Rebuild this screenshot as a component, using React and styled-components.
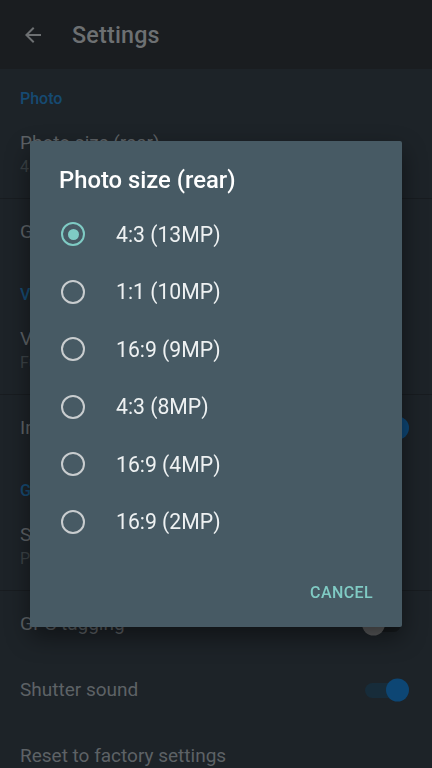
import React from 'react';
import styled, { createGlobalStyle } from 'styled-components';

const GlobalStyle = createGlobalStyle`
	html, body {
		margin: 0;
		padding: 0;
		background: #1d2328;
	}
	body {
		font-family: Roboto, "Noto Sans", "Liberation Sans", sans-serif;
		-webkit-font-smoothing: antialiased;
	}
`;

const sizes = ['4:3 (13MP)', '1:1 (10MP)', '16:9 (9MP)', '4:3 (8MP)', '16:9 (4MP)', '16:9 (2MP)'];

const BackArrow = () => (
	<svg width="24" height="24" viewBox="0 0 24 24">
		<path d="M20 11H7.83l5.59-5.59L12 4l-8 8 8 8 1.41-1.41L7.83 13H20v-2z" fill="#6d7072" />
	</svg>
);

const Switch = ({ on }) => (
	<Track on={on ? 1 : 0}>
		<Thumb on={on ? 1 : 0} />
	</Track>
);

export default function App() {
	return (
		<>
			<GlobalStyle />
			<Page>
				<Toolbar>
					<BackArrow />
					<ToolbarTitle>Settings</ToolbarTitle>
				</Toolbar>

				<Category>Photo</Category>
				<TwoLine>
					<Primary>Photo size (rear)</Primary>
					<Secondary>4:3 (13MP)</Secondary>
				</TwoLine>
				<Divider />
				<OneLine>
					<Primary>Grid</Primary>
				</OneLine>

				<Category>Video</Category>
				<TwoLine>
					<Primary>Video quality</Primary>
					<Secondary>Full HD 1080p</Secondary>
				</TwoLine>
				<Divider />
				<OneLine>
					<Primary>Image stabilization</Primary>
					<Switch on />
				</OneLine>

				<Category>General</Category>
				<TwoLine>
					<Primary>Storage location</Primary>
					<Secondary>Phone storage</Secondary>
				</TwoLine>
				<Divider />
				<OneLine>
					<Primary>GPS tagging</Primary>
					<Switch />
				</OneLine>
				<OneLine>
					<Primary>Shutter sound</Primary>
					<Switch on />
				</OneLine>
				<OneLine>
					<Primary>Reset to factory settings</Primary>
				</OneLine>
			</Page>

			<Scrim>
				<Dialog>
					<DialogTitle>Photo size (rear)</DialogTitle>
					<Options>
						{sizes.map((s, i) => (
							<Option key={s}>
								<Radio checked={i === 0 ? 1 : 0} />
								<OptionLabel>{s}</OptionLabel>
							</Option>
						))}
					</Options>
					<Actions>
						<TextButton>Cancel</TextButton>
					</Actions>
				</Dialog>
			</Scrim>
		</>
	);
}

const Page = styled.div`
	width: 432px;
	height: 768px;
	overflow: hidden;
	background: #1d2328;
`;

const Toolbar = styled.div`
	height: 69px;
	background: #1a1d20;
	display: flex;
	align-items: center;
	padding-left: 21px;
	box-sizing: border-box;
	gap: 27px;
`;

const ToolbarTitle = styled.div`
	font-size: 23.3px;
	font-weight: 500;
	color: #6d7072;
	letter-spacing: 0.2px;
`;

const Category = styled.div`
	padding: 21px 20px 0;
	font-size: 16px;
	line-height: 18px;
	font-weight: 500;
	color: #164a72;
`;

const TwoLine = styled.div`
	padding: 23px 20px 20px;
	display: flex;
	flex-direction: column;
	gap: 1px;
`;

const OneLine = styled.div`
	height: 66px;
	padding: 0 20px;
	display: flex;
	align-items: center;
	justify-content: space-between;
`;

const Primary = styled.div`
	font-size: 19px;
	line-height: 24px;
	color: #5d6266;
`;

const Secondary = styled.div`
	font-size: 16px;
	line-height: 22px;
	color: #3b4246;
`;

const Divider = styled.div`
	height: 1px;
	background: #181c20;
`;

const Track = styled.div`
	position: relative;
	width: 36px;
	height: 15px;
	border-radius: 8px;
	margin-right: 11px;
	background: ${p => (p.on ? '#172c3a' : '#15191c')};
`;

const Thumb = styled.div`
	position: absolute;
	top: 50%;
	width: 23px;
	height: 23px;
	border-radius: 50%;
	transform: translateY(-50%);
	left: ${p => (p.on ? '21px' : '-3px')};
	background: ${p => (p.on ? '#0d4674' : '#5b5c5d')};
`;

const Scrim = styled.div`
	position: fixed;
	inset: 0;
	display: flex;
	align-items: center;
	justify-content: center;
`;

const Dialog = styled.div`
	width: 372px;
	box-sizing: border-box;
	background: #475a64;
	border-radius: 2px;
	padding: 25px 0 16px;
	box-shadow: 0 10px 24px rgba(0, 0, 0, 0.45);
`;

const DialogTitle = styled.div`
	padding: 0 29px;
	font-size: 23.8px;
	line-height: 28px;
	font-weight: 500;
	color: #ffffff;
`;

const Options = styled.div`
	margin-top: 11px;
	display: flex;
	flex-direction: column;
`;

const Option = styled.div`
	height: 57.6px;
	display: flex;
	align-items: center;
	padding-left: 31px;
	gap: 31px;
`;

const Radio = styled.div`
	width: 24px;
	height: 24px;
	box-sizing: border-box;
	border-radius: 50%;
	border: 2px solid ${p => (p.checked ? '#7fcbc4' : '#c9cdcf')};
	display: flex;
	align-items: center;
	justify-content: center;

	&::after {
		content: '';
		width: 11px;
		height: 11px;
		border-radius: 50%;
		background: #7fcbc4;
		display: ${p => (p.checked ? 'block' : 'none')};
	}
`;

const OptionLabel = styled.div`
	font-size: 21.2px;
	color: #eef1f2;
`;

const Actions = styled.div`
	margin-top: 24px;
	display: flex;
	justify-content: flex-end;
	padding-right: 21px;
`;

const TextButton = styled.div`
	height: 36px;
	padding: 0 8px;
	display: flex;
	align-items: center;
	text-transform: uppercase;
	font-size: 16px;
	font-weight: 500;
	letter-spacing: 0.4px;
	color: #80cbc4;
`;
